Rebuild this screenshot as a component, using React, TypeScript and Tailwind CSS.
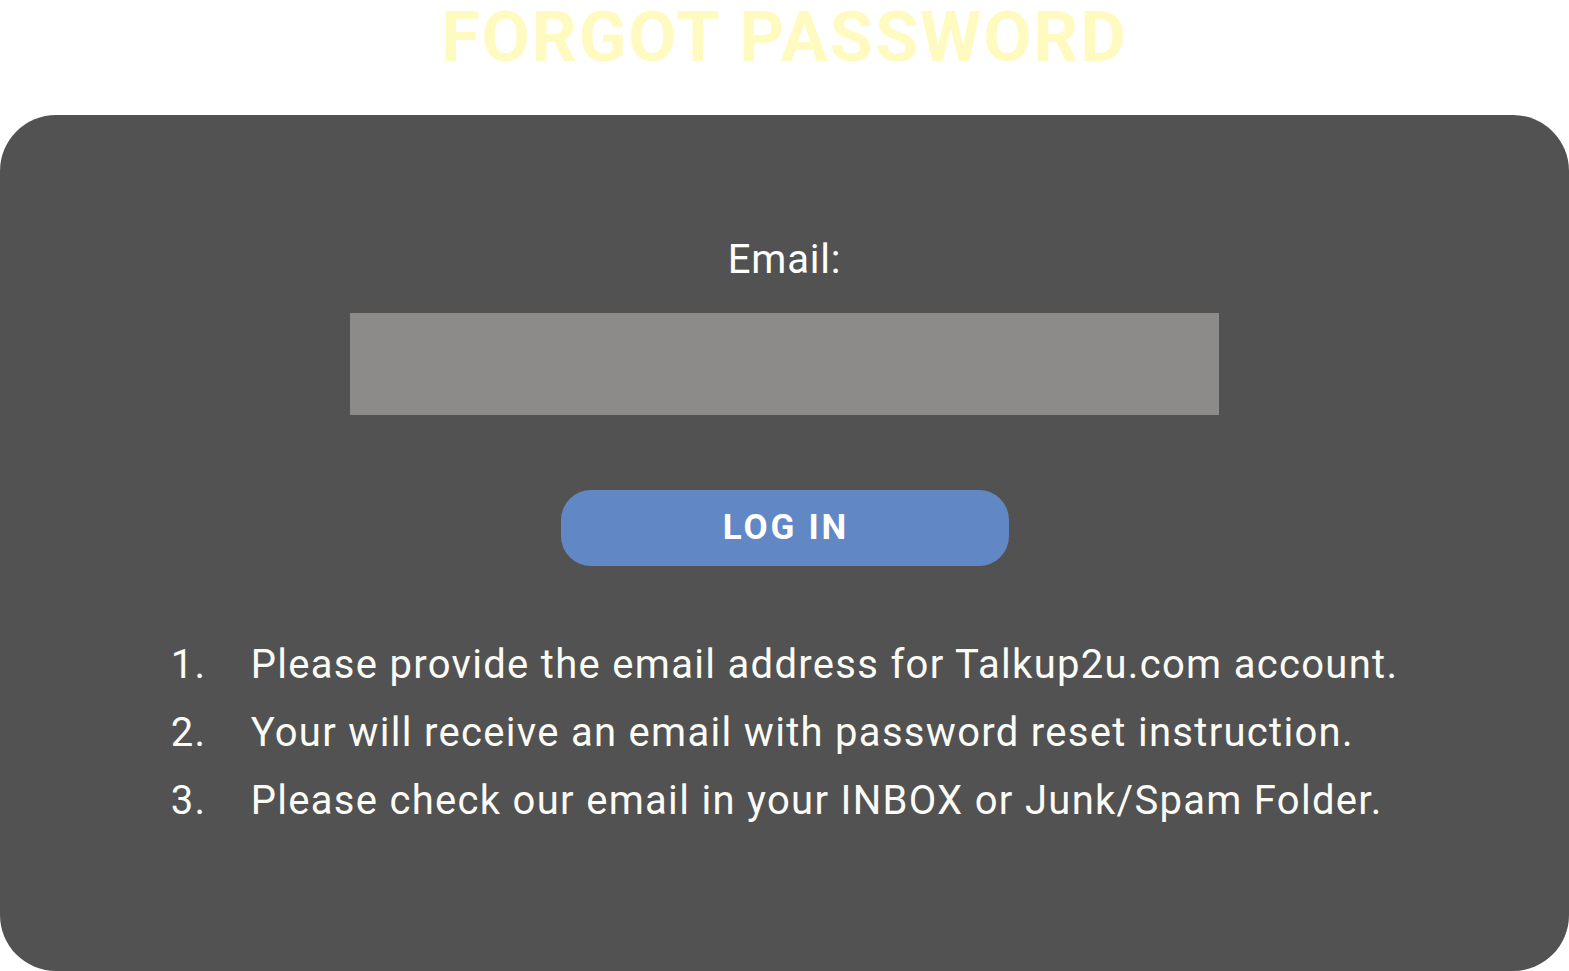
const steps = [
  "Please provide the email address for Talkup2u.com account.",
  "Your will receive an email with password reset instruction.",
  "Please check our email in your INBOX or Junk/Spam Folder.",
];

export default function App() {
  return (
    <div className="flex h-[971px] w-full flex-col overflow-hidden bg-white font-['Roboto',_'Liberation_Sans',_sans-serif]">
      <h1 className="h-[115px] shrink-0 text-center text-[70px] font-bold leading-[74px] tracking-[2px] text-[#fffac0]">
        FORGOT PASSWORD
      </h1>

      <div className="flex flex-1 flex-col items-center rounded-[56px] bg-[#525252] pt-[125px]">
        <label className="text-[40px] leading-[40px] tracking-[0.8px] text-white">Email:</label>
        <input
          type="email"
          className="mt-[33px] h-[102px] w-[869px] bg-[#8c8b89] px-4 text-[32px] text-white outline-none"
        />
        <button
          type="button"
          className="mt-[75px] h-[76px] w-[448px] rounded-[30px] bg-[#6188c4] pl-[3px] text-[35px] font-bold tracking-[0.08em] text-white"
        >
          LOG IN
        </button>

        <ol className="mt-[65px] flex flex-col text-[40px] leading-[68px] tracking-[1.3px] text-[#fbfbf5]">
          {steps.map((step, i) => (
            <li key={i} className="flex">
              <span className="w-[80px] shrink-0">{i + 1}.</span>
              <span>{step}</span>
            </li>
          ))}
        </ol>
      </div>
    </div>
  );
}
